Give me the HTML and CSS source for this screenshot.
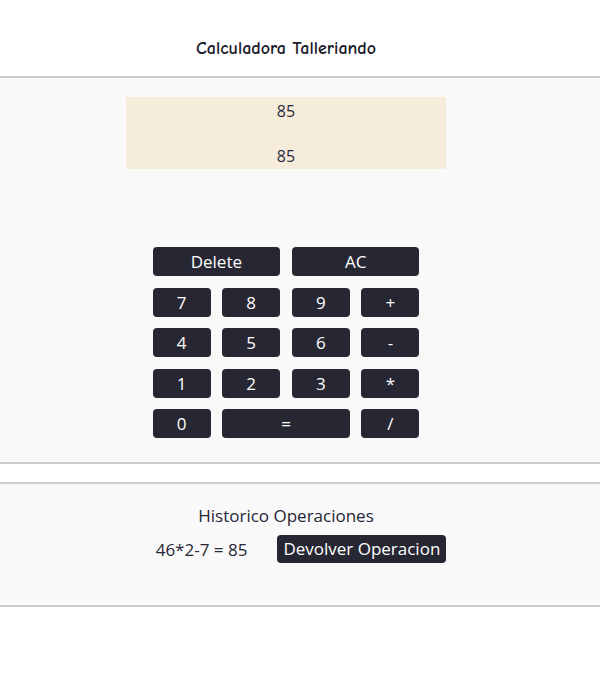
FILE: index.html
```html
<!DOCTYPE html>
<html lang="es">
<head>
<meta charset="utf-8">
<title>Calculadora Talleriando</title>
<link rel="stylesheet" href="styles.css">
</head>
<body>
<header class="header">
  <div class="inner">
    <h1 class="title">Calculadora Talleriando</h1>
  </div>
</header>
<section class="calc">
  <div class="inner">
    <div class="display">
      <div class="display-line">85</div>
      <div class="display-line">85</div>
    </div>
    <div class="keys">
      <button class="key key-wide">Delete</button>
      <button class="key key-wide">AC</button>
      <button class="key">7</button>
      <button class="key">8</button>
      <button class="key">9</button>
      <button class="key">+</button>
      <button class="key">4</button>
      <button class="key">5</button>
      <button class="key">6</button>
      <button class="key">-</button>
      <button class="key">1</button>
      <button class="key">2</button>
      <button class="key">3</button>
      <button class="key">*</button>
      <button class="key">0</button>
      <button class="key key-wide">=</button>
      <button class="key">/</button>
    </div>
  </div>
</section>
<div class="spacer"></div>
<section class="history">
  <div class="inner">
    <h2 class="history-title">Historico Operaciones</h2>
    <div class="history-row">
      <span class="history-op">46*2-7 = 85</span>
      <button class="history-btn">Devolver Operacion</button>
    </div>
  </div>
</section>
</body>
</html>
```
FILE: styles.css
```css
html, body {
  margin: 0;
  padding: 0;
  background: #ffffff;
}
body {
  font-family: "Open Sans", "Noto Sans", sans-serif;
  color: #262636;
}
.inner {
  width: 572px;
  display: flex;
  flex-direction: column;
  align-items: center;
}
.header {
  height: 76px;
  border-bottom: 2px solid #cccccc;
}
.title {
  margin: 38px 0 0;
  font-family: "Comic Sans MS", "Comic Neue", cursive, "DejaVu Sans", sans-serif;
  font-weight: 600;
  font-size: 18px;
  line-height: 22px;
  color: #1c1c2c;
}
.calc {
  background: #f9f9f9;
  height: 386px;
  box-sizing: border-box;
  padding-top: 19px;
  border-bottom: 2px solid #cccccc;
}
.display {
  width: 320px;
  height: 72px;
  background: #f5ecdc;
  display: flex;
  flex-direction: column;
  justify-content: space-between;
  align-items: center;
  padding: 2px 0 1px;
  box-sizing: border-box;
  font-size: 16px;
  line-height: 24px;
  color: #2a2a3a;
}
.keys {
  margin-top: 78px;
  display: grid;
  grid-template-columns: repeat(4, 58px);
  grid-auto-rows: 29px;
  column-gap: 11.67px;
  row-gap: 11.5px;
}
.key {
  border: none;
  border-radius: 4px;
  background: #272733;
  color: #ffffff;
  font-family: "Open Sans", "Noto Sans", sans-serif;
  font-size: 17px;
  line-height: 29px;
  padding: 0;
  margin: 0;
}
.key-wide {
  grid-column: span 2;
}
.spacer {
  height: 18px;
  border-bottom: 2px solid #cccccc;
}
.history {
  background: #f9f9f9;
  height: 123px;
  box-sizing: border-box;
  padding-top: 21px;
  border-bottom: 2px solid #cccccc;
}
.history-title {
  margin: 0;
  font-weight: normal;
  font-size: 17px;
  line-height: 22px;
  color: #262636;
}
.history-row {
  margin-top: 8px;
  display: flex;
  align-items: center;
  gap: 30px;
  padding-left: 30px;
}
.history-op {
  font-size: 17px;
  color: #262636;
}
.history-btn {
  border: none;
  border-radius: 4px;
  background: #272733;
  color: #ffffff;
  font-family: "Open Sans", "Noto Sans", sans-serif;
  font-size: 17px;
  line-height: 28px;
  height: 28px;
  padding: 0 6px;
}
```
